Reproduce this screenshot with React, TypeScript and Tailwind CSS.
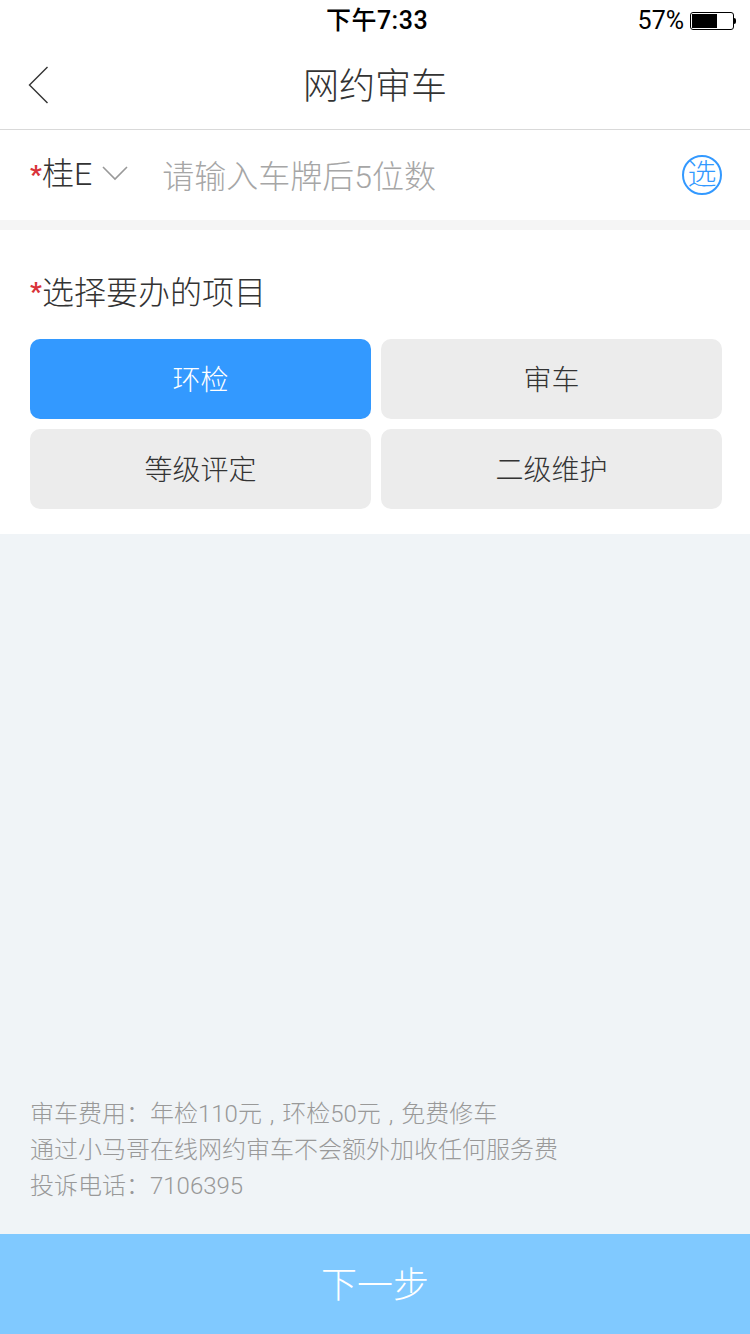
import React, { useState } from "react";

const fontStack = "font-['Roboto','Noto_Sans_CJK_SC',sans-serif]";

const items = ["环检", "审车", "等级评定", "二级维护"];

const App = () => {
  const [selected, setSelected] = useState("环检");

  return (
    <div className={`flex h-[1334px] w-[750px] flex-col overflow-hidden bg-[#f0f4f7] ${fontStack}`}>
      {/* status bar */}
      <div className="flex h-[40px] items-center bg-white pt-[2px] pr-[14px] text-black">
        <div className="w-[319px]" />
        <div className="w-[116px] text-center text-[25px] leading-[40px] font-medium tracking-[0.5px] whitespace-nowrap">下午7:33</div>
        <div className="ml-auto flex items-center">
          <span className="text-[25px] leading-[40px]">57%</span>
          <div className="ml-[6px] flex h-[18px] w-[44px] items-center rounded-[3px] border border-black p-[1px]">
            <div className="h-full w-[25px] bg-black" />
          </div>
          <div className="h-[6px] w-[2px] rounded-r-[2px] bg-black" />
        </div>
      </div>

      {/* nav bar */}
      <div className="relative flex h-[90px] items-center justify-center border-b border-[#d9d9d9] bg-white pt-[4px]">
        <svg className="absolute top-[26px] left-[28px]" width="21" height="38" viewBox="0 0 21 38" fill="none">
          <path d="M19.5 1 L1.5 19 L19.5 37" stroke="#333" strokeWidth="1.4" />
        </svg>
        <span className="text-[36px] font-light text-[#333]">网约审车</span>
      </div>

      {/* plate row */}
      <div className="flex h-[90px] items-center bg-white pr-[28px] pl-[30px]">
        <span className="mt-[-1px] w-[12px] text-[26px] leading-none font-bold text-[#d9333a]">*</span>
        <span className="mt-[-2px] text-[32px] leading-none font-light text-[#333]">桂E</span>
        <svg className="mt-[-4px] ml-[10px]" width="26" height="16" viewBox="0 0 26 16" fill="none">
          <path d="M1 2 L13 14 L25 2" stroke="#999" strokeWidth="1.6" />
        </svg>
        <span className="mt-[4px] ml-[34px] text-[32px] font-light text-[#a6a6a6]">请输入车牌后5位数</span>
        <div className="mt-[-1px] ml-auto flex h-[40px] w-[40px] items-center justify-center rounded-full border-2 border-[#3399ff] pt-[2px] text-[29px] leading-none font-light text-[#3399ff]">
          选
        </div>
      </div>

      <div className="h-[10px] bg-[#f5f5f5]" />

      {/* project select */}
      <div className="h-[304px] bg-white pt-[41px] pr-[28px] pl-[30px]">
        <div className="flex h-[44px] items-center">
          <span className="mt-[-2px] w-[12px] text-[26px] leading-none font-bold text-[#d9333a]">*</span>
          <span className="text-[32px] leading-none font-light text-[#333]">选择要办的项目</span>
        </div>
        <div className="mt-[24px] grid grid-cols-2 gap-[10px]">
          {items.map((item) => (
            <button
              key={item}
              onClick={() => setSelected(item)}
              className={`flex h-[80px] items-center justify-center rounded-[10px] pt-[3px] text-[28px] font-light ${
                selected === item ? "bg-[#3399ff] text-white" : "bg-[#ececec] text-[#333]"
              }`}
            >
              {item}
            </button>
          ))}
        </div>
      </div>

      {/* notes */}
      <div className="mt-auto px-[30px] pb-[30px] text-[24px] leading-[36px] font-light text-[#999] [word-spacing:2px]">
        <p>审车费用：年检110元 , 环检50元 , 免费修车</p>
        <p>通过小马哥在线网约审车不会额外加收任何服务费</p>
        <p>投诉电话：7106395</p>
      </div>

      {/* next button */}
      <button className="h-[100px] bg-[#80c9ff] pt-[3px] text-[36px] font-light text-white">下一步</button>
    </div>
  );
};

export default App;
